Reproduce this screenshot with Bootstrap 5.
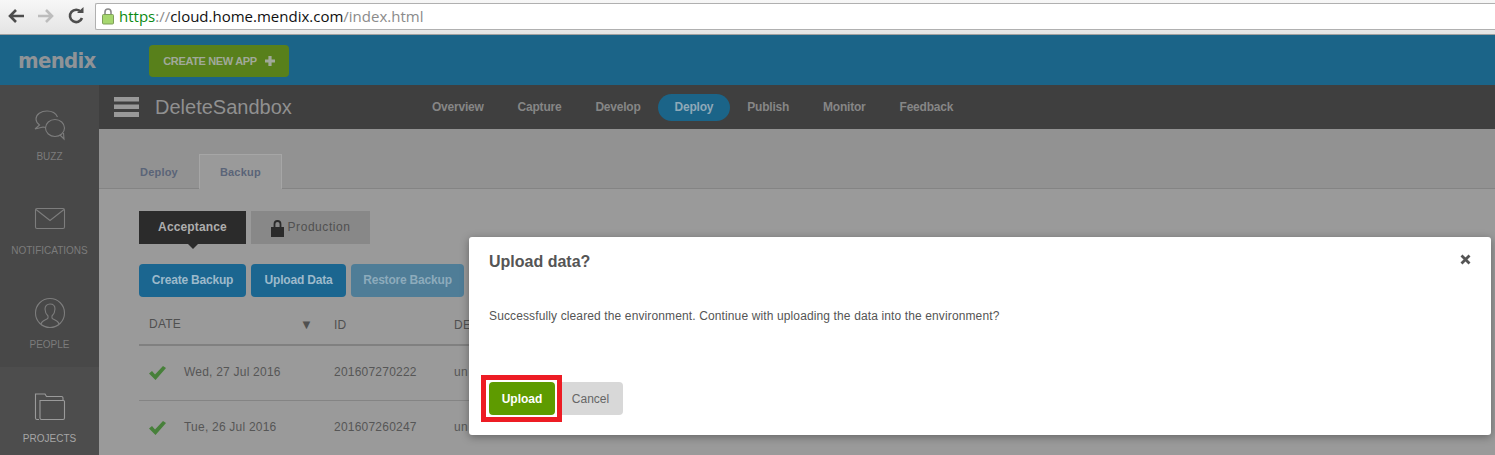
<!DOCTYPE html>
<html lang="en">
<head>
  <meta charset="UTF-8">
  <title>DeleteSandbox - Backup</title>
  <meta name="viewport" content="width=device-width, initial-scale=1">
  <link href="https://cdn.jsdelivr.net/npm/bootstrap@5.3.3/dist/css/bootstrap.min.css" rel="stylesheet">
  <style>
    html, body {
      height: 455px;
      overflow: hidden;
    }
    body {
      background-color: #9a9a9a;
      font-family: "Liberation Sans", Arial, sans-serif;
      font-size: 12px;
      position: relative;
    }
    .browser-bar {
      height: 35px;
      background: linear-gradient(#f7f7f7, #e4e4e4);
      border-bottom: 1px solid #a0a0a0;
      padding: 3px 0 5px 8px;
    }
    .browser-btn {
      width: 22px;
      margin-right: 7px;
    }
    .url-field {
      height: 27px;
      background: #fff;
      border: 1px solid #b0b0b0;
      border-right: 0;
      border-radius: 2px 0 0 2px;
      padding-left: 6px;
      font-family: "Open Sans", sans-serif;
      font-size: 15px;
      color: #8b8b8b;
    }
    .url-lock {
      margin-right: 5px;
    }
    .url-https { color: #0b8a12; }
    .url-host { color: #111; }
    .top-bar {
      height: 50px;
      background-color: #1b6488;
      padding-left: 18px;
    }
    .brand-name {
      width: 131px;
      font-family: "DejaVu Sans Condensed", "Liberation Sans", sans-serif;
      font-size: 22px;
      font-weight: 700;
      letter-spacing: -.7px;
      color: #8f9397;
    }
    .btn-new-app {
      width: 140px;
      height: 32px;
      margin-top: 1px;
      background-color: #58801b;
      border: 0;
      border-radius: 4px;
      padding: 1px 0 0;
      font-size: 11px;
      font-weight: 700;
      letter-spacing: -.35px;
      color: #a1a99a;
    }
    .side-bar {
      width: 99px;
      height: 370px;
      background-color: #484848;
      flex-shrink: 0;
    }
    .side-item {
      height: 94px;
      padding-top: 24px;
      font-size: 10px;
      color: #7c7c7c;
    }
    .side-item svg {
      display: block;
      height: 34px;
      margin-bottom: 6px;
    }
    .side-item.is-active {
      background-color: #4d4d4d;
      color: #a6a6a6;
    }
    .sub-bar {
      height: 44px;
      background-color: #3f3f3f;
      padding-left: 15px;
    }
    .app-title {
      width: 260px;
      margin-left: 16px;
      font-size: 20px;
      color: #909090;
    }
    .menu-bar {
      width: 25px;
      height: 20px;
    }
    .sub-bar .nav-link {
      padding: 0 17px;
      height: 27px;
      line-height: 27px;
      border-radius: 14px;
      font-size: 12px;
      font-weight: 700;
      letter-spacing: -.22px;
      color: #868686;
    }
    .sub-bar .nav-link.active {
      background-color: #1b6488;
      color: #8fa9b8;
    }
    .tab-zone {
      height: 60px;
      background-color: #929292;
      padding-top: 25px;
    }
    .tab-zone .nav-tabs {
      border-bottom: 1px solid #848484;
      padding-left: 20px;
    }
    .tab-zone .nav-link {
      height: 35px;
      padding: 0 20px;
      line-height: 35px;
      margin: 0 0 -1px;
      border: 1px solid transparent;
      border-radius: 0;
      font-size: 11px;
      font-weight: 700;
      letter-spacing: .2px;
      color: #5a6478;
    }
    .tab-zone .nav-link.active {
      background-color: #9a9a9a;
      border-color: #a6a6a6 #a6a6a6 #9a9a9a;
      color: #5a6478;
    }
    .main-zone {
      padding: 22px 0 0 40px;
    }
    .tight-row {
      gap: 5px;
    }
    .env-row {
      margin-bottom: 20px;
    }
    .env-tab {
      height: 33px;
      line-height: 33px;
      font-weight: 700;
      text-align: center;
      position: relative;
    }
    .env-tab-on {
      width: 107px;
      background-color: #2b2b2b;
      letter-spacing: .15px;
      color: #aeaeae;
    }
    .env-tab-on::after {
      content: "";
      position: absolute;
      left: 49px;
      top: 33px;
      border: 5px solid transparent;
      border-top-color: #2b2b2b;
      border-bottom: 0;
    }
    .env-tab-off {
      width: 119px;
      background-color: #888;
      font-weight: 400;
      letter-spacing: .55px;
      color: #505050;
    }
    .btn-action {
      height: 33px;
      padding: 0 0 1px;
      background-color: #1b6690;
      border: 0;
      border-radius: 4px;
      font-size: 12px;
      font-weight: 700;
      letter-spacing: -.2px;
      color: #9dbacb;
    }
    .btn-action.is-off {
      background-color: #4f7d97;
      color: #8dabbc;
    }
    .btn-w-create { width: 107px; }
    .btn-w-upload { width: 95px; }
    .btn-w-restore { width: 113px; }
    .backup-table {
      width: 1300px;
      margin: 10px 0 0;
      --bs-table-bg: transparent;
      --bs-table-color: #565656;
      color: #565656;
      font-size: 12px;
      letter-spacing: .22px;
      table-layout: fixed;
    }
    .col-date { width: 185px; }
    .col-id { width: 120px; }
    .backup-table th {
      height: 38px;
      padding: 0 10px 1px;
      border-bottom: 2px solid #808080;
      font-weight: 400;
      vertical-align: middle;
      color: #505050;
    }
    .backup-table td {
      height: 55px;
      padding: 0 10px 2px;
      border-bottom: 1px solid #848484;
      vertical-align: middle;
    }
    .sort-mark {
      float: right;
      font-size: 13px;
      margin-right: 1px;
    }
    .check-mark {
      width: 17px;
      height: 14px;
      margin-right: 18px;
      vertical-align: -4px;
    }
    .upload-dialog {
      position: absolute;
      left: 469px;
      top: 237px;
      width: 1022px;
      height: 198px;
      background-color: #fff;
      border: 0;
      border-radius: 3px;
      box-shadow: 0 2px 8px rgba(0, 0, 0, .35);
      color: #555;
    }
    .upload-dialog .modal-title {
      font-size: 16px;
      font-weight: 700;
      line-height: 18px;
    }
    .upload-dialog .modal-header {
      padding: 16px 20px 0;
      border: 0;
    }
    .upload-dialog .modal-body {
      padding: 0 20px;
      margin-top: 38px;
      flex: none;
      height: 73px;
      font-size: 12px;
      line-height: 14px;
      letter-spacing: .125px;
    }
    .dialog-close {
      background: none;
      border: 0;
      padding: 0;
      width: 12px;
      height: 12px;
      line-height: 0;
    }
    .btn-upload, .btn-cancel {
      height: 33px;
      padding: 0;
      border: 0;
      font-size: 12px;
    }
    .btn-upload {
      width: 66px;
      background-color: #5e9b00;
      border-radius: 4px;
      font-weight: 700;
      color: #fff;
    }
    .btn-cancel {
      width: 65px;
      margin-left: 3px;
      background-color: #d8d8d8;
      border-radius: 4px;
      color: #666;
    }
    .dialog-actions {
      padding-left: 20px;
    }
    .red-box {
      position: absolute;
      left: 12px;
      top: 138px;
      width: 81px;
      height: 47px;
      border: 5px solid #ed1c24;
      pointer-events: none;
    }
  </style>
</head>
<body>
  <!-- BROWSER CHROME -->
  <div class="browser-bar d-flex align-items-center">
    <svg class="browser-btn" height="18" viewBox="0 0 22 18"><path d="M2 9h14M8 3 2 9l6 6" fill="none" stroke="#4d4d4d" stroke-width="2.6"/></svg>
    <svg class="browser-btn" height="18" viewBox="0 0 22 18"><path d="M1 9h14M9 3l6 6-6 6" fill="none" stroke="#bdbdbd" stroke-width="2.6"/></svg>
    <svg class="browser-btn" height="18" viewBox="0 0 22 18"><path d="M15 5a6.2 6.2 0 1 0 1 6" fill="none" stroke="#4d4d4d" stroke-width="2.6"/><path d="M11 6h6.500V0z" fill="#4d4d4d"/></svg>
    <div class="url-field flex-grow-1 d-flex align-items-center">
      <svg class="url-lock" width="12" height="18" viewBox="0 0 12 18"><path d="M3 8V5a3 3 0 0 1 6 0v3" fill="none" stroke="#8a8a8a" stroke-width="1.600"/><rect x=".5" y="7.500" width="11" height="9.500" rx="1" fill="#a6d76f" stroke="#7f9f5a"/></svg>
      <span><span class="url-https">https</span>://<span class="url-host">cloud.home.mendix.com</span>/index.html</span>
    </div>
  </div>

  <!-- TOP BAR -->
  <div class="top-bar d-flex align-items-center">
    <div class="brand-name">mendix</div>
    <button class="btn-new-app d-flex align-items-center justify-content-center">CREATE NEW APP
      <svg class="ms-2" width="10" height="10" viewBox="0 0 10 10"><path d="M5 0v10M0 5h10" stroke="#a1a99a" stroke-width="3.200"/></svg>
    </button>
  </div>

  <div class="d-flex">
    <!-- SIDEBAR -->
    <div class="side-bar">
      <div class="side-item text-center">
        <svg class="mx-auto" width="32" viewBox="0 0 32 34" fill="none" stroke="#7d7d7d" stroke-width="1.100"><path d="M13 2c-6 0-11 3.500-11 8 0 2.500 1.500 4.500 3.500 6L1 20l8-2c1 .3 1.500.4 2.500.4"/><path d="M13 2c5 0 9 2.500 10.500 6"/><ellipse cx="21" cy="19" rx="9.500" ry="8.500"/><path d="M26 26l4 4-.5-6"/></svg>
        BUZZ
      </div>
      <div class="side-item text-center">
        <svg class="mx-auto" width="32" viewBox="0 0 32 34" fill="none" stroke="#7d7d7d" stroke-width="1.100"><rect x="1.500" y="5.500" width="29" height="20" rx="1.500"/><path d="m2 6.500 14 11 14-11"/></svg>
        NOTIFICATIONS
      </div>
      <div class="side-item text-center">
        <svg class="mx-auto" width="32" viewBox="0 0 32 34" fill="none" stroke="#7d7d7d" stroke-width="1.100"><circle cx="16" cy="16" r="14.500"/><path d="M7 27c1-4 6-4 7-6v-2c-2-2-3-4-3-7 0-3 2-5 5-5s5 2 5 5c0 3-1 5-3 7v2c1 2 6 2 7 6"/></svg>
        PEOPLE
      </div>
      <div class="side-item is-active text-center">
        <svg class="mx-auto" width="32" viewBox="0 0 32 34" fill="none" stroke="#9a9a9a" stroke-width="1.100"><path d="M5 28.500H3A1.500 1.500 0 0 1 1.500 27V3h9.500l1.500 2.500h15a1.500 1.500 0 0 1 1.500 1.500v2.500"/><path d="M6 9.500h23.500a1 1 0 0 1 1 1V27a1.500 1.500 0 0 1-1.500 1.500H7.500A1.500 1.500 0 0 1 6 27z"/></svg>
        PROJECTS
      </div>
    </div>

    <div class="flex-grow-1">
      <!-- APP BAR -->
      <div class="sub-bar d-flex align-items-center">
        <svg class="menu-bar" viewBox="0 0 25 20"><path d="M0 0h25v4.500H0zM0 7.500h25V12H0zM0 15h25v5H0z" fill="#999"/></svg>
        <div class="app-title">DeleteSandbox</div>
        <ul class="nav nav-pills">
          <li class="nav-item"><a class="nav-link" href="#">Overview</a></li>
          <li class="nav-item"><a class="nav-link" href="#">Capture</a></li>
          <li class="nav-item"><a class="nav-link" href="#">Develop</a></li>
          <li class="nav-item"><a class="nav-link active" href="#">Deploy</a></li>
          <li class="nav-item"><a class="nav-link" href="#">Publish</a></li>
          <li class="nav-item"><a class="nav-link" href="#">Monitor</a></li>
          <li class="nav-item"><a class="nav-link" href="#">Feedback</a></li>
        </ul>
      </div>

      <!-- TABS -->
      <div class="tab-zone">
        <ul class="nav nav-tabs">
          <li class="nav-item"><a class="nav-link" href="#">Deploy</a></li>
          <li class="nav-item"><a class="nav-link active" href="#">Backup</a></li>
        </ul>
      </div>

      <div class="main-zone">
        <div class="d-flex tight-row env-row">
          <div class="env-tab env-tab-on">Acceptance</div>
          <div class="env-tab env-tab-off d-flex align-items-center justify-content-center">
            <svg class="me-1" width="13" height="18" viewBox="0 0 13 18"><path d="M3.500 8V5a3 3 0 0 1 6 0v3" fill="none" stroke="#2b2b2b" stroke-width="1.800"/><rect y="8" width="13" height="10" fill="#2b2b2b"/></svg>
            Production
          </div>
        </div>
        <div class="d-flex tight-row">
          <button class="btn-action btn-w-create">Create Backup</button>
          <button class="btn-action btn-w-upload">Upload Data</button>
          <button class="btn-action btn-w-restore is-off">Restore Backup</button>
        </div>
        <table class="table backup-table">
          <colgroup><col class="col-date"><col class="col-id"><col></colgroup>
          <thead>
            <tr>
              <th>DATE <span class="sort-mark">▼</span></th>
              <th>ID</th>
              <th>DE</th>
            </tr>
          </thead>
          <tbody>
            <tr>
              <td><svg class="check-mark" viewBox="0 0 17 14"><path d="M0 7.500 3 5l3 3.500L14 0l3 2L6.500 14z" fill="#47803a"/></svg>Wed, 27 Jul 2016</td>
              <td>201607270222</td>
              <td>un</td>
            </tr>
            <tr>
              <td><svg class="check-mark" viewBox="0 0 17 14"><path d="M0 7.500 3 5l3 3.500L14 0l3 2L6.500 14z" fill="#47803a"/></svg>Tue, 26 Jul 2016</td>
              <td>201607260247</td>
              <td>un</td>
            </tr>
          </tbody>
        </table>
      </div>
    </div>
  </div>

  <!-- UPLOAD DIALOG -->
  <div class="modal-content upload-dialog">
    <div class="modal-header d-flex justify-content-between align-items-start">
      <h5 class="modal-title">Upload data?</h5>
      <button class="dialog-close" aria-label="Close">
        <svg width="11" height="11" viewBox="0 0 11 11"><path d="M1.500 1.500l8 8M9.500 1.500l-8 8" stroke="#555" stroke-width="2.800"/></svg>
      </button>
    </div>
    <div class="modal-body">Successfully cleared the environment. Continue with uploading the data into the environment?</div>
    <div class="d-flex dialog-actions">
      <button class="btn-upload">Upload</button>
      <button class="btn-cancel">Cancel</button>
    </div>
    <div class="red-box"></div>
  </div>

  <script src="https://cdn.jsdelivr.net/npm/bootstrap@5.3.3/dist/js/bootstrap.bundle.min.js"></script>
</body>
</html>
